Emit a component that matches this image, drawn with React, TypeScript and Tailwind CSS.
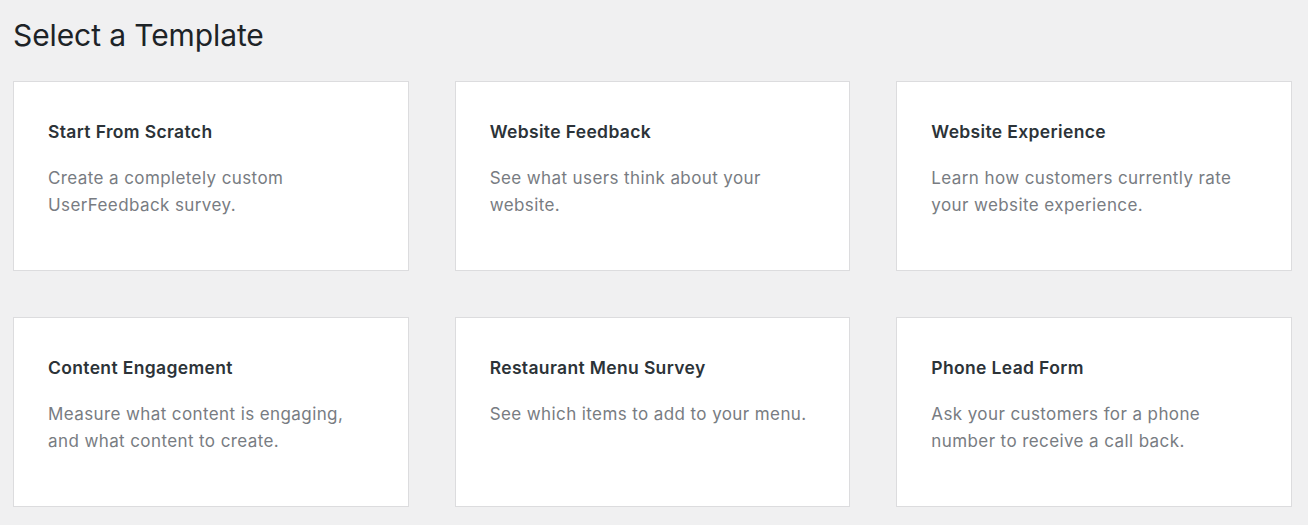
const templates = [
  { title: 'Start From Scratch', desc: 'Create a completely custom UserFeedback survey.' },
  { title: 'Website Feedback', desc: 'See what users think about your website.' },
  { title: 'Website Experience', desc: 'Learn how customers currently rate your website experience.' },
  { title: 'Content Engagement', desc: 'Measure what content is engaging, and what content to create.' },
  { title: 'Restaurant Menu Survey', desc: 'See which items to add to your menu.' },
  { title: 'Phone Lead Form', desc: 'Ask your customers for a phone number to receive a call back.' },
]

export default function App() {
  return (
    <div className="min-h-[525px] bg-[#f0f0f1] pl-[13px] pr-[16px] pt-[15px] font-['Inter',sans-serif]">
      <h1 className="text-[30px] leading-[40px] text-[#1d2327] font-normal tracking-[-0.1px]">Select a Template</h1>

      {/* template grid */}
      <div className="grid grid-cols-3 gap-[46px] mt-[26px]">
        {templates.map((t) => (
          <div key={t.title} className="h-[190px] bg-white border border-[#dcdcde] pl-[34px] pr-[30px] pt-[38px] cursor-pointer">
            <h3 className="text-[17.5px] leading-[24px] font-semibold text-[#2c3338] tracking-[0.35px]">{t.title}</h3>
            <p className="mt-[21px] text-[17px] leading-[27px] text-[#787c82] tracking-[0.4px] max-w-[320px]">{t.desc}</p>
          </div>
        ))}
      </div>
    </div>
  )
}
